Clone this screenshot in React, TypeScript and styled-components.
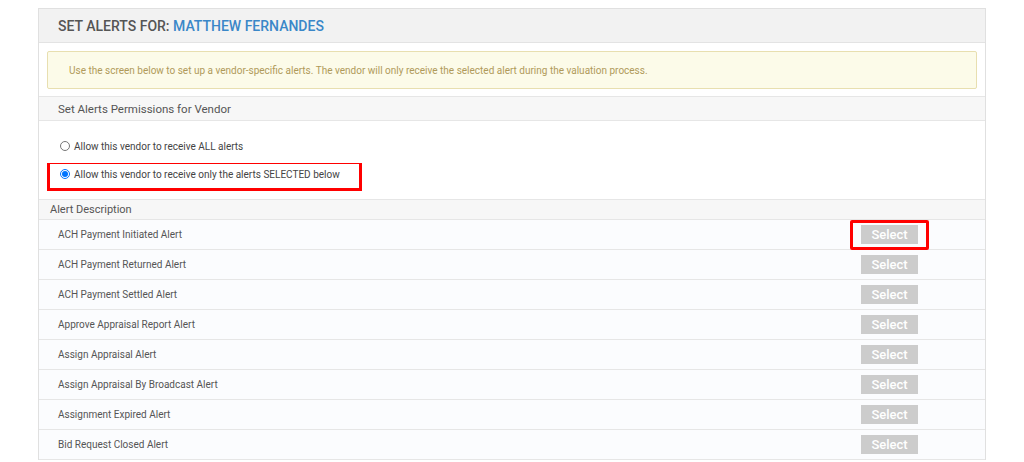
import React from "react";
import styled, { createGlobalStyle } from "styled-components";

const G = createGlobalStyle`
  body { margin: 0; background: #fff; font-family: Roboto, "Liberation Sans", sans-serif; }
`;
const Page = styled.div`padding: 8px 38px 0 38px; width: 948px;`;
const Panel = styled.div`border: 1px solid #e0e0e0; border-bottom: none; background: #fff;`;
const Head = styled.div`
  background: #f2f2f2; height: 33px; display: flex; align-items: center; padding-left: 19px;
  font-size: 14px; color: #555; border-bottom: 1px solid #e3e3e3; font-weight: 500;
  span { color: #3a87c8; }
`;
const Notice = styled.div`
  margin: 8px 8px 7px 8px; height: 36px; border: 1px solid #e8dfb0; background: #fcfbe9;
  border-radius: 2px; display: flex; align-items: center; padding-left: 21px;
  font-size: 10px; color: #b09a5a;
`;
const SubHead = styled.div`
  background: #f7f7f7; height: 23px; display: flex; align-items: center; padding-left: 19px;
  font-size: 11.5px; color: #555; border-top: 1px solid #e6e6e6; border-bottom: 1px solid #e6e6e6;
`;
const Radios = styled.div`padding: 14px 0 8px 8px; display: flex; flex-direction: column; gap: 0;`;
const RadioRow = styled.label<{ $hl?: boolean }>`
  display: flex; align-items: center; gap: 4px; font-size: 10px; color: #444;
  height: 20px; width: 299px; padding-left: 10px; padding-bottom: 4px; box-sizing: content-box;
  border: 3px solid ${p => (p.$hl ? "#ff0000" : "transparent")}; border-top-width: 1px;
  input { margin: 0; width: 10px; height: 10px; }
`;
const TableHead = styled.div`
  background: #f7f7f7; height: 19px; display: flex; align-items: center; padding-left: 11px;
  font-size: 11px; color: #555; border-top: 1px solid #e6e6e6; border-bottom: 1px solid #e6e6e6;
`;
const Row = styled.div`
  height: 29px; display: flex; align-items: center; padding-left: 19px; font-size: 10px;
  color: #555; border-bottom: 1px solid #e6e6e6; background: #fbfcfe;
`;
const Name = styled.div`flex: 1;`;
const BtnWrap = styled.div<{ $hl?: boolean }>`
  width: 73px; height: 24px; margin-right: 56px; display: flex; align-items: center; justify-content: center;
  border: 3px solid ${p => (p.$hl ? "#ff0000" : "transparent")}; border-radius: 2px;
`;
const Btn = styled.button`
  width: 57px; height: 19px; background: #cccccc; border: none; color: #fff;
  font-family: Roboto, "Liberation Sans", sans-serif; font-size: 13px; font-weight: 500; padding: 0;
`;

const alerts = [
  "ACH Payment Initiated Alert", "ACH Payment Returned Alert", "ACH Payment Settled Alert",
  "Approve Appraisal Report Alert", "Assign Appraisal Alert", "Assign Appraisal By Broadcast Alert",
  "Assignment Expired Alert", "Bid Request Closed Alert",
];

export default function App() {
  return (
    <Page>
      <G />
      <Panel>
        <Head>SET ALERTS FOR:&nbsp;<span>MATTHEW FERNANDES</span></Head>
        <Notice>Use the screen below to set up a vendor-specific alerts. The vendor will only receive the selected alert during the valuation process.</Notice>
        <SubHead>Set Alerts Permissions for Vendor</SubHead>
        <Radios>
          <RadioRow><input type="radio" name="r" />Allow this vendor to receive ALL alerts</RadioRow>
          <RadioRow $hl><input type="radio" name="r" defaultChecked />Allow this vendor to receive only the alerts SELECTED below</RadioRow>
        </Radios>
        <TableHead>Alert Description</TableHead>
        {alerts.map((a, i) => (
          <Row key={a}>
            <Name>{a}</Name>
            <BtnWrap $hl={i === 0}><Btn>Select</Btn></BtnWrap>
          </Row>
        ))}
      </Panel>
    </Page>
  );
}
